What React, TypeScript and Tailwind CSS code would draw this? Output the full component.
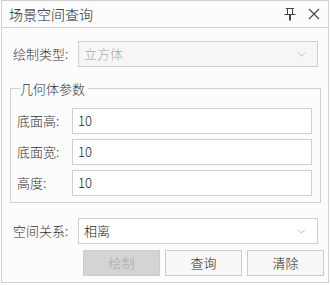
import { ChevronDown } from "lucide-react";

const font = { fontFamily: '"Noto Sans CJK SC", "Noto Sans", sans-serif' };

function PinIcon() {
  return (
    <svg viewBox="0 0 12 14" className="h-[14px] w-[12px]" fill="none" stroke="#444" strokeWidth="1">
      <path d="M2 1.5h8" />
      <path d="M3.5 1.5v6M8.5 1.5v6" />
      <path d="M0.5 7.5h11" />
      <path d="M6 7.5v6" strokeWidth="2" />
    </svg>
  );
}

function CloseIcon() {
  return (
    <svg viewBox="0 0 12 12" className="h-[12px] w-[12px]" fill="none" stroke="#444" strokeWidth="1.1">
      <path d="M1 1l10 10M11 1L1 11" />
    </svg>
  );
}

function Select({ value, disabled }: { value: string; disabled?: boolean }) {
  return (
    <div
      className={
        "flex h-[26px] w-[240px] items-center justify-between border border-[#cfcfcf] pl-[5px] pr-[9px] " +
        (disabled ? "bg-[#f6f6f6] text-[#a8a8a8]" : "bg-white text-[#222]")
      }
    >
      <span>{value}</span>
      <ChevronDown className="h-[13px] w-[13px] text-[#9a9a9a]" strokeWidth={1.2} />
    </div>
  );
}

function Field({ label, value }: { label: string; value: string }) {
  return (
    <div className="flex items-center">
      <span className="w-[55px] text-[#333]">{label}</span>
      <div className="flex h-[26px] w-[240px] items-center border border-[#cfcfcf] bg-white pl-[5px] text-[#222]">
        {value}
      </div>
    </div>
  );
}

export default function App() {
  return (
    <div className="h-[285px] w-[330px] bg-white text-[13px] font-light" style={font}>
      <div className="ml-px flex h-[283px] w-[328px] flex-col border border-[#d0d0d0] bg-[#fcfcfc]">
        <div className="flex h-[27px] items-center justify-between border-b border-[#d0d0d0] pl-[7px] pr-[8px] text-[14px] text-[#222]">
          <span>场景空间查询</span>
          <div className="flex items-center gap-[12px]">
            <PinIcon />
            <CloseIcon />
          </div>
        </div>

        <div className="ml-[11px] mt-[13px] flex items-center">
          <span className="w-[65px] text-[#333]">绘制类型:</span>
          <Select value="立方体" disabled />
        </div>

        <fieldset className="ml-[8px] mt-[12px] h-[124px] w-[311px] border border-[#d0d0d0] px-[6px]">
          <legend className="ml-[3px] pr-[3px] text-[#333]">几何体参数</legend>
          <div className="mt-[9px] flex flex-col gap-[5px]">
            <Field label="底面高:" value="10" />
            <Field label="底面宽:" value="10" />
            <Field label="高度:" value="10" />
          </div>
        </fieldset>

        <div className="ml-[11px] mt-[15px] flex items-center">
          <span className="w-[65px] text-[#333]">空间关系:</span>
          <Select value="相离" />
        </div>

        <div className="ml-[81px] mt-[6px] flex gap-[5px]">
          <button className="h-[26px] w-[77px] border border-[#cccccc] bg-[#d4d4d4] text-[#a6a6a6]">绘制</button>
          <button className="h-[26px] w-[77px] border border-[#cccccc] bg-[#f7f7f7] text-[#222]">查询</button>
          <button className="h-[26px] w-[77px] border border-[#cccccc] bg-[#f7f7f7] text-[#222]">清除</button>
        </div>
      </div>
    </div>
  );
}
